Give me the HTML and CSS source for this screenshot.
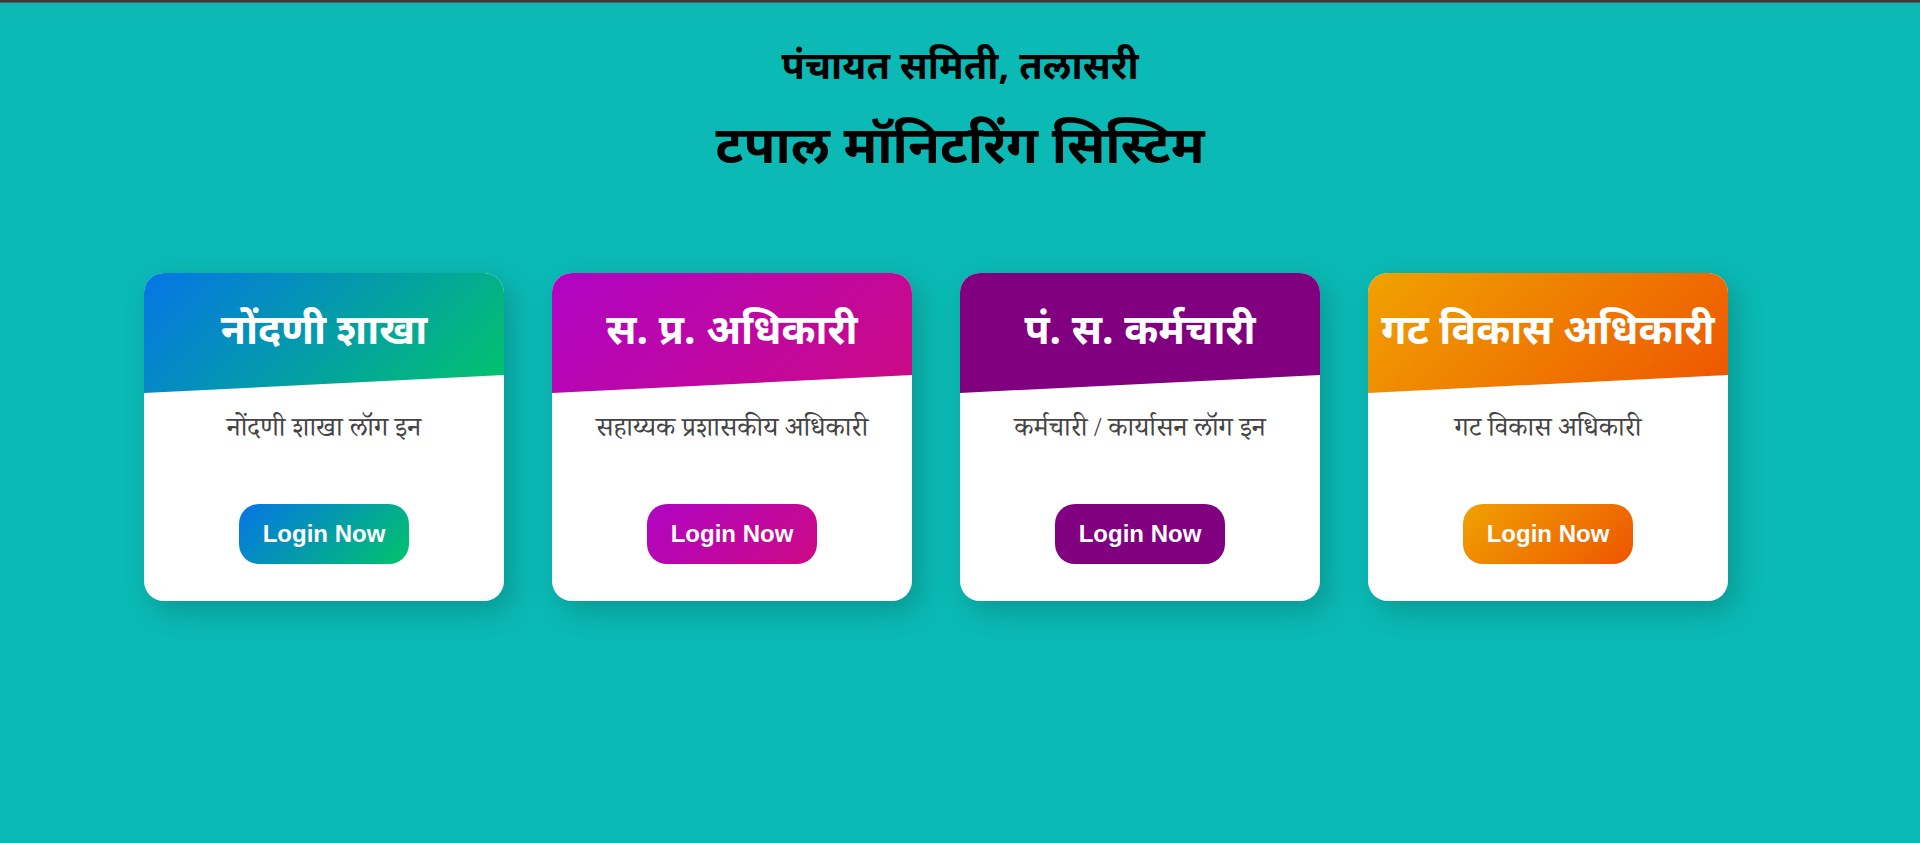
FILE: index.html
```html
<!DOCTYPE html>
<html lang="mr">
<head>
<meta charset="utf-8">
<title>टपाल मॉनिटरिंग सिस्टिम</title>
<link rel="stylesheet" href="styles.css">
</head>
<body>
<div class="topbar"></div>
<header class="page-head">
  <h2 class="office">पंचायत समिती, तलासरी</h2>
  <h1 class="system">टपाल मॉनिटरिंग सिस्टिम</h1>
</header>
<main class="cards">
  <section class="card c-blue">
    <div class="card-head"><h3>नोंदणी शाखा</h3></div>
    <div class="card-body">
      <p class="desc">नोंदणी शाखा लॉग इन</p>
      <a class="btn" href="#">Login Now</a>
    </div>
  </section>
  <section class="card c-magenta">
    <div class="card-head"><h3>स. प्र. अधिकारी</h3></div>
    <div class="card-body">
      <p class="desc">सहाय्यक प्रशासकीय अधिकारी</p>
      <a class="btn" href="#">Login Now</a>
    </div>
  </section>
  <section class="card c-purple">
    <div class="card-head"><h3>पं. स. कर्मचारी</h3></div>
    <div class="card-body">
      <p class="desc">कर्मचारी / कार्यासन लॉग इन</p>
      <a class="btn" href="#">Login Now</a>
    </div>
  </section>
  <section class="card c-orange">
    <div class="card-head"><h3>गट विकास अधिकारी</h3></div>
    <div class="card-body">
      <p class="desc">गट विकास अधिकारी</p>
      <a class="btn" href="#">Login Now</a>
    </div>
  </section>
</main>
</body>
</html>
```
FILE: styles.css
```css
html, body {
  margin: 0;
  padding: 0;
}
body {
  background: #0bbab5;
  min-height: 100vh;
  font-family: "Noto Sans", "Noto Sans Devanagari", sans-serif;
  color: #000;
}
.topbar {
  height: 2px;
  background: #3a3a3a;
  border-bottom: 1px solid #5a5a5a;
}
.page-head {
  text-align: center;
  padding-top: 36px;
}
.office {
  margin: 0;
  font-size: 38px;
  font-weight: 700;
  line-height: 50px;
}
.system {
  margin: 22px 0 0;
  font-size: 52px;
  font-weight: 700;
  line-height: 64px;
}
.cards {
  display: flex;
  justify-content: center;
  gap: 48px;
  padding: 98px 48px 0 0;
}
.card {
  width: 360px;
  height: 328px;
  background: #fff;
  border-radius: 20px;
  overflow: hidden;
  box-shadow: 8px 10px 28px rgba(0, 60, 60, 0.28);
  display: flex;
  flex-direction: column;
}
.card-head {
  height: 120px;
  clip-path: polygon(0 0, 100% 0, 100% 85%, 0 100%);
  display: flex;
  justify-content: center;
  padding-top: 29px;
  box-sizing: border-box;
}
.card-head h3 {
  margin: 0;
  color: #fff;
  font-size: 41px;
  font-weight: 700;
  line-height: 52px;
  white-space: nowrap;
}
.card-body {
  display: flex;
  flex-direction: column;
  align-items: center;
  flex: 1;
}
.desc {
  margin: 16px 0 0;
  font-family: "Liberation Serif", "Noto Serif Devanagari", "Noto Sans Devanagari", serif;
  font-size: 27px;
  line-height: 36px;
  color: #444;
}
.btn {
  margin-top: 59px;
  width: 170px;
  height: 60px;
  border-radius: 20px;
  display: flex;
  align-items: center;
  justify-content: center;
  color: #fff;
  text-decoration: none;
  font-family: "Liberation Sans", Arial, sans-serif;
  font-weight: 700;
  font-size: 24px;
}
.c-blue .card-head, .c-blue .btn {
  background: linear-gradient(135deg, #0575e6, #02c46a);
}
.c-magenta .card-head, .c-magenta .btn {
  background: linear-gradient(135deg, #b004c4, #cc0a84);
}
.c-purple .card-head, .c-purple .btn {
  background: #800080;
}
.c-orange .card-head, .c-orange .btn {
  background: linear-gradient(135deg, #f0a200, #ee5500);
}
```
